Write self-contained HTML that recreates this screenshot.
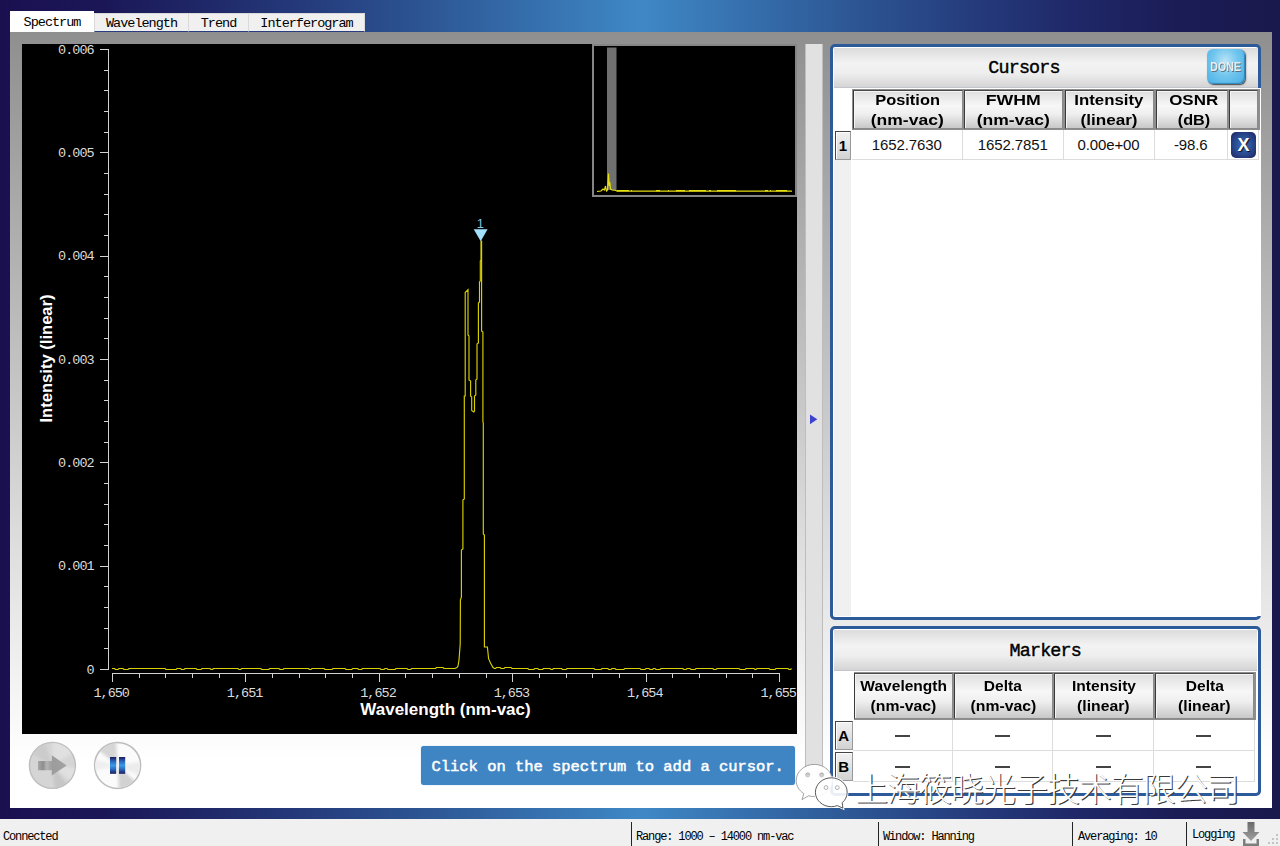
<!DOCTYPE html><html><head><meta charset="utf-8"><title>Spectrum</title><style>
*{box-sizing:border-box;margin:0;padding:0}
html,body{width:1280px;height:846px;overflow:hidden}
body{position:relative;font-family:"Liberation Sans",sans-serif;
 background:linear-gradient(90deg,#1a1050 0%,#1b1757 8%,#1f2868 16%,#253b7c 24%,#2c5290 32%,#346aa8 40%,#3f88c6 50%,#346aa8 60%,#2c5290 68%,#253b7c 76%,#1f2868 84%,#1b1c56 92%,#1a194d 100%);}
.abs{position:absolute}
.mono{font-family:"Liberation Mono",monospace}
#panel{left:10px;top:32px;width:1262px;height:775.5px;background:linear-gradient(180deg,#8f8f8f 0%,#ffffff 94%)}
.tab{top:13px;height:19px;background:#f0f0f0;border:1px solid #d9d9d9;border-bottom:1px solid #2a3c80;font:13.5px "Liberation Mono",monospace;letter-spacing:-1px;color:#000;text-align:center;line-height:19px;white-space:nowrap}
#tab0{left:10px;top:11px;width:84px;height:21px;background:#fff;border:1px solid #fff;line-height:21px}
#plot{left:22px;top:44px;width:775px;height:690px;background:#000}
#status{left:0;top:819px;width:1280px;height:27px;background:#f0f0f0}
.st{top:831px;font:12px "Liberation Mono",monospace;letter-spacing:-1.15px;color:#000;white-space:nowrap;line-height:13px}
.sep{top:822px;width:1px;height:24px;background:#222}
#splitter{left:804.5px;top:44px;width:18px;height:752px;background:#e1e1e1;border-left:1px solid #bdbdbd;border-right:1px solid #bdbdbd}
.title{background:linear-gradient(180deg,#dcdcdc 0%,#f3f3f3 40%,#eeeeee 65%,#d4d4d4 100%);font:18.4px "Liberation Mono",monospace;letter-spacing:-0.84px;-webkit-text-stroke:0.4px #000;text-align:center;color:#000;white-space:nowrap}
.hc{background:linear-gradient(180deg,#dedede 0%,#f7f7f7 40%,#efefef 62%,#c8c8c8 100%);border:1px solid;border-color:#4a4a4a #8a8a8a #8a8a8a #3a3a3a;box-shadow:inset 1px 1px 0 #f4f4f4;font:bold 15.5px "Liberation Sans",sans-serif;text-align:center;color:#000;white-space:nowrap}
.sx{display:inline-block;transform-origin:50% 50%}
.dc{font:15px "Liberation Sans",sans-serif;text-align:center;color:#111;white-space:nowrap;border-right:1px solid #dcdcdc;border-bottom:1px solid #dcdcdc;background:#fff}
.rh{background:linear-gradient(180deg,#f2f2f2,#d2d2d2);border:1px solid;border-color:#444 #999 #999 #444;box-shadow:inset 1px 1px 0 #fff;font:bold 15px "Liberation Sans",sans-serif;text-align:center;color:#000}
</style></head><body>
<div id="panel" class="abs"></div>
<div id="tab0" class="abs tab">Spectrum</div>
<div class="abs tab" style="left:94px;width:95px">Wavelength</div>
<div class="abs tab" style="left:188px;width:61px">Trend</div>
<div class="abs tab" style="left:248px;width:117px">Interferogram</div>
<svg class="abs" id="plot" width="775" height="690" viewBox="0 0 775 690">
<rect width="775" height="690" fill="#000"/>
<path d="M86.5 5V626M78 5.5H87M82 26.5H87M82 46.5H87M82 67.5H87M82 88.5H87M78 108.5H87M82 129.5H87M82 150.5H87M82 170.5H87M82 191.5H87M78 212.5H87M82 232.5H87M82 253.5H87M82 274.5H87M82 294.5H87M78 315.5H87M82 336.5H87M82 356.5H87M82 377.5H87M82 398.5H87M78 418.5H87M82 439.5H87M82 460.5H87M82 480.5H87M82 501.5H87M78 522.5H87M82 542.5H87M82 563.5H87M82 584.5H87M82 604.5H87M78 625.5H87M90 629.5H758M90.5 629V638M117.5 629V634M143.5 629V634M170.5 629V634M197.5 629V634M223.5 629V638M250.5 629V634M277.5 629V634M303.5 629V634M330.5 629V634M357.5 629V638M383.5 629V634M410.5 629V634M437.5 629V634M464.5 629V634M490.5 629V638M517.5 629V634M544.5 629V634M570.5 629V634M597.5 629V634M624.5 629V638M650.5 629V634M677.5 629V634M704.5 629V634M730.5 629V634M757.5 629V638" stroke="#d2d2d2" stroke-width="1" fill="none" shape-rendering="crispEdges"/>
<text x="71.6" y="9.5" text-anchor="end" font-family="Liberation Mono, monospace" font-size="13.5" letter-spacing="-1" fill="#dcdcdc">0.006</text>
<text x="71.6" y="112.8" text-anchor="end" font-family="Liberation Mono, monospace" font-size="13.5" letter-spacing="-1" fill="#dcdcdc">0.005</text>
<text x="71.6" y="216.2" text-anchor="end" font-family="Liberation Mono, monospace" font-size="13.5" letter-spacing="-1" fill="#dcdcdc">0.004</text>
<text x="71.6" y="319.5" text-anchor="end" font-family="Liberation Mono, monospace" font-size="13.5" letter-spacing="-1" fill="#dcdcdc">0.003</text>
<text x="71.6" y="422.8" text-anchor="end" font-family="Liberation Mono, monospace" font-size="13.5" letter-spacing="-1" fill="#dcdcdc">0.002</text>
<text x="71.6" y="526.2" text-anchor="end" font-family="Liberation Mono, monospace" font-size="13.5" letter-spacing="-1" fill="#dcdcdc">0.001</text>
<text x="71.6" y="629.5" text-anchor="end" font-family="Liberation Mono, monospace" font-size="13.5" letter-spacing="-1" fill="#dcdcdc">0</text>
<text x="89.2" y="652.5" text-anchor="middle" font-family="Liberation Mono, monospace" font-size="13.5" letter-spacing="-1" fill="#dcdcdc">1,650</text>
<text x="222.6" y="652.5" text-anchor="middle" font-family="Liberation Mono, monospace" font-size="13.5" letter-spacing="-1" fill="#dcdcdc">1,651</text>
<text x="356.0" y="652.5" text-anchor="middle" font-family="Liberation Mono, monospace" font-size="13.5" letter-spacing="-1" fill="#dcdcdc">1,652</text>
<text x="489.40000000000003" y="652.5" text-anchor="middle" font-family="Liberation Mono, monospace" font-size="13.5" letter-spacing="-1" fill="#dcdcdc">1,653</text>
<text x="622.8000000000001" y="652.5" text-anchor="middle" font-family="Liberation Mono, monospace" font-size="13.5" letter-spacing="-1" fill="#dcdcdc">1,654</text>
<text x="756.2" y="652.5" text-anchor="middle" font-family="Liberation Mono, monospace" font-size="13.5" letter-spacing="-1" fill="#dcdcdc">1,655</text>
<text x="423.5" y="670.6" text-anchor="middle" font-family="Liberation Sans, sans-serif" font-weight="bold" font-size="17" fill="#fff">Wavelength (nm-vac)</text>
<text transform="translate(30.200000000000003 314.5) rotate(-90)" text-anchor="middle" font-family="Liberation Sans, sans-serif" font-weight="bold" font-size="16.6" fill="#fff">Intensity (linear)</text>
<path d="M90.0 624.5 L92.5 624.5 L93.5 625.5 L96.0 625.5 L97.0 624.5 L101.0 624.5 L102.0 625.5 L106.0 625.5 L107.0 624.5 L143.0 624.5 L144.0 625.5 L154.0 625.5 L155.0 624.5 L158.5 624.5 L159.5 625.5 L162.0 625.5 L163.0 624.5 L174.0 624.5 L175.0 625.5 L179.0 625.5 L180.0 624.5 L188.0 624.5 L189.0 625.5 L190.5 625.5 L191.5 624.5 L216.0 624.5 L217.0 625.5 L218.6 625.5 L219.6 624.5 L238.7 624.5 L239.7 625.5 L246.7 625.5 L247.7 624.5 L257.0 624.5 L258.0 625.5 L261.0 625.5 L262.0 624.5 L286.5 624.5 L287.5 625.5 L289.0 625.5 L290.0 624.5 L302.0 624.5 L303.0 625.5 L310.0 625.5 L311.0 624.5 L323.0 624.5 L324.0 625.5 L329.7 625.5 L330.7 624.5 L335.7 624.5 L336.7 625.5 L339.5 625.5 L340.5 624.5 L358.0 624.5 L359.0 625.5 L362.0 625.5 L363.0 624.5 L365.0 624.5 L366.0 625.5 L373.0 625.5 L374.0 624.5 L385.0 624.5 L386.0 625.5 L388.7 625.5 L389.7 624.5 L413.5 624.5 L414.5 623.5 L421.0 623.5 L422.0 624.5 L433.0 624.5 L435.0 623.5 L436.0 622.0 L437.0 616.0 L438.2 600.0 L438.4 556.0 L439.4 553.0 L439.4 506.0 L440.9 505.0 L440.9 456.0 L442.3 455.0 L442.3 352.0 L443.2 352.0 L443.2 248.5 L446.0 245.7 L446.0 291.0 L447.0 292.0 L447.0 336.0 L448.6 337.0 L448.6 352.0 L449.7 353.0 L449.7 366.5 L451.8 368.0 L452.5 367.0 L452.5 352.0 L453.8 351.0 L453.8 336.0 L455.0 335.0 L455.0 300.0 L456.4 299.0 L456.4 259.0 L457.5 258.0 L457.5 238.0 L458.3 237.0 L458.3 217.0 L459.0 216.0 L459.0 197.0 L459.6 197.0 L459.6 287.0 L460.9 288.0 L460.9 378.0 L461.3 379.0 L461.3 490.0 L462.4 491.0 L462.4 603.0 L465.4 603.0 L466.6 614.7 L468.5 619.0 L471.0 623.5 L472.5 624.5 L473.5 624.5 L474.5 623.5 L478.0 623.5 L479.0 624.5 L482.0 624.5 L483.0 623.5 L489.0 623.5 L490.0 624.5 L505.8 624.5 L506.8 625.5 L511.8 625.5 L512.8 624.5 L515.8 624.5 L516.8 625.5 L520.5 625.5 L521.5 624.5 L528.0 624.5 L529.0 625.5 L530.5 625.5 L531.5 624.5 L539.5 624.5 L540.5 625.5 L544.0 625.5 L545.0 624.5 L572.0 624.5 L573.0 625.5 L579.0 625.5 L580.0 624.5 L585.8 624.5 L586.8 625.5 L589.0 625.5 L590.0 624.5 L593.0 624.5 L594.0 625.5 L601.8 625.5 L602.8 624.5 L618.0 624.5 L619.0 625.5 L623.0 625.5 L624.0 624.5 L627.0 624.5 L628.0 625.5 L630.5 625.5 L631.5 624.5 L633.0 624.5 L634.0 625.5 L638.0 625.5 L639.0 624.5 L660.8 624.5 L661.8 625.5 L664.0 625.5 L665.0 624.5 L668.0 624.5 L669.0 625.5 L673.0 625.5 L674.0 624.5 L690.8 624.5 L691.8 625.5 L694.0 625.5 L695.0 624.5 L717.0 624.5 L718.0 625.5 L723.0 625.5 L724.0 624.5 L732.0 624.5 L733.0 625.5 L734.0 625.5 L735.0 624.5 L747.0 624.5 L748.0 625.5 L753.0 625.5 L754.0 624.5 L766.0 624.5 L767.0 625.5 L768.5 625.5 L769.5 624.5 L769.5 624.5" stroke="#d8d000" stroke-width="1.15" fill="none" stroke-linejoin="miter"/>
<path d="M451.7 185.3H465.6L458.7 197.2Z" fill="#a3e0fb"/>
<text x="458.3" y="183.6" text-anchor="middle" font-family="Liberation Sans, sans-serif" font-size="13" fill="#86c3e4">1</text>
<rect x="571" y="1" width="203" height="151" fill="#000" stroke="#858585" stroke-width="2"/>
<rect x="585" y="3.5" width="9.5" height="142.5" fill="#707070"/>
<path d="M575.0 147.5 L579.0 147.0 L581.0 145.0 L582.5 146.0 L583.5 142.0 L584.5 147.0 L585.5 146.0 L586.5 129.5 L587.2 142.0 L587.8 138.0 L588.5 145.0 L590.0 146.0 L594.0 146.5 L595.0 147.2 H770" stroke="#e6de10" stroke-width="1.2" fill="none"/>
<path d="M595 146.6H607M609 146.6H610M634 146.6H638M646 146.6H647M654 146.6H663M667 146.6H684M687 146.6H689M695 146.6H714M743 146.6H746M748 146.6H749M754 146.6H765" stroke="#e6de10" stroke-width="1.3" fill="none"/>
</svg>
<svg class="abs" style="left:26px;top:739px" width="120" height="54" viewBox="26 739 120 54">
<defs>
<linearGradient id="ar" x1="0" x2="1"><stop offset="0" stop-color="#a8a8a8"/><stop offset=".18" stop-color="#8e8e8e"/><stop offset=".3" stop-color="#b4b4b4"/><stop offset=".5" stop-color="#9c9c9c"/><stop offset="1" stop-color="#a2a2a2"/></linearGradient>
<linearGradient id="pb" x1="0" y1="0" x2="0" y2="1"><stop offset="0" stop-color="#1c1c5c"/><stop offset=".28" stop-color="#2a6cc4"/><stop offset=".5" stop-color="#3a9ae8"/><stop offset=".72" stop-color="#2a6cc4"/><stop offset="1" stop-color="#1c1c5c"/></linearGradient>
</defs>
<filter id="bl" x="-20%" y="-20%" width="140%" height="140%"><feGaussianBlur stdDeviation="1.6"/></filter>
<clipPath id="c1"><circle cx="52.4" cy="765.4" r="22.4"/></clipPath><clipPath id="c2"><circle cx="117.6" cy="765.4" r="22.4"/></clipPath>
<circle cx="52.4" cy="765.4" r="23" fill="#d5d5d5" stroke="#bebebe" stroke-width="1.4"/>
<g clip-path="url(#c1)"><g filter="url(#bl)">
<path d="M52.4 765.4L52.4 740A25 25 0 0 1 74 752Z" fill="#e0e0e0"/>
<path d="M52.4 765.4L30 752A25 25 0 0 1 44 741Z" fill="#cbcbcb"/>
<path d="M52.4 765.4L68 786A25 25 0 0 1 55 791Z" fill="#c6c6c6"/>
<path d="M52.4 765.4L78 768A25 25 0 0 1 72 782Z" fill="#e0e0e0"/>
</g></g>
<path d="M38 761H51.8V755.2L66.6 765.5L51.8 775.6V770.2H38Z" fill="url(#ar)"/>
<circle cx="117.6" cy="765.4" r="23" fill="#fbfbfb" stroke="#bdbdbd" stroke-width="1.5"/>
<g clip-path="url(#c2)"><g filter="url(#bl)">
<path d="M117.6 765.4L97 749A25 25 0 0 1 116 740Z" fill="#d6d6d6"/>
<path d="M117.6 765.4L119 791A25 25 0 0 0 137 783Z" fill="#d2d2d2"/>
<path d="M117.6 765.4L143 761A25 25 0 0 1 140 776Z" fill="#ececec"/>
<path d="M117.6 765.4L93 771A25 25 0 0 1 92.500 759Z" fill="#eeeeee"/>
</g></g>
<rect x="110" y="757" width="6.2" height="16.8" fill="url(#pb)"/>
<rect x="119" y="757" width="6.2" height="16.8" fill="url(#pb)"/>
</svg>
<div class="abs mono" style="left:421px;top:746px;width:374px;height:39px;background:#3f85c3;border-radius:3px;box-shadow:0 0 1px #6aa0d0;color:#fff;-webkit-text-stroke:0.5px #fff;font-size:15.46px;line-height:42px;padding-left:10.5px;white-space:nowrap">Click on the spectrum to add a cursor.</div>
<div id="splitter" class="abs"></div>
<svg class="abs" style="left:809px;top:413px" width="10" height="13" viewBox="0 0 10 13"><path d="M1 1.5L8.3 6.3L1 11.2Z" fill="#3e43cf"/></svg>
<div class="abs " style="left:830px;top:44px;width:431px;height:575.5px;border:3.5px solid #2d5a98;border-radius:5px;background:#fff"></div>
<div class="abs title" style="left:833.5px;top:47.5px;width:424.0px;height:40.5px;line-height:42.6px;padding-right:43px;border-bottom:1.5px solid #c2c5cc">Cursors</div>
<div class="abs " style="left:833.5px;top:88px;width:427.5px;height:528px;background:#fff"></div>
<div class="abs " style="left:833.5px;top:159.5px;width:17.5px;height:456.5px;background:#f0f0f0"></div>
<div class="abs " style="left:851.5px;top:88.5px;width:408.0px;height:41.5px;background:#8e8e8e"></div>
<div class="abs hc" style="left:852.5px;top:89.5px;width:110.0px;height:39.5px;line-height:19.4px;font-size:15px"><div style="margin-top:-0.4px"><span class="sx" style="transform:scaleX(1.094)">Position</span><br><span class="sx" style="transform:scaleX(1.167)">(nm-vac)</span></div></div>
<div class="abs hc" style="left:964.0px;top:89.5px;width:99.0px;height:39.5px;line-height:19.4px;font-size:15px"><div style="margin-top:-0.4px"><span class="sx" style="transform:scaleX(1.18)">FWHM</span><br><span class="sx" style="transform:scaleX(1.167)">(nm-vac)</span></div></div>
<div class="abs hc" style="left:1064.5px;top:89.5px;width:89.5px;height:39.5px;line-height:19.4px;font-size:15px"><div style="margin-top:-0.4px"><span class="sx" style="transform:scaleX(1.12)">Intensity</span><br><span class="sx" style="transform:scaleX(1.14)">(linear)</span></div></div>
<div class="abs hc" style="left:1155.5px;top:89.5px;width:72.0px;height:39.5px;line-height:19.4px;font-size:15px"><div style="margin-top:-0.4px"><div style="padding-left:4px"><span class="sx" style="transform:scaleX(1.13)">OSNR</span><br><span class="sx" style="transform:scaleX(1.08)">(dB)</span></div></div></div>
<div class="abs hc" style="left:1229.0px;top:89.5px;width:29.0px;height:39.5px;line-height:19.4px;font-size:15px"><div style="margin-top:-0.4px"></div></div>
<div class="abs dc" style="left:851.5px;top:130px;width:111.5px;height:29.5px;line-height:29.5px;letter-spacing:-0.1px">1652.7630</div>
<div class="abs dc" style="left:963.0px;top:130px;width:100.5px;height:29.5px;line-height:29.5px;letter-spacing:-0.1px">1652.7851</div>
<div class="abs dc" style="left:1063.5px;top:130px;width:91.0px;height:29.5px;line-height:29.5px;letter-spacing:-0.1px">0.00e+00</div>
<div class="abs dc" style="left:1154.5px;top:130px;width:73.5px;height:29.5px;line-height:29.5px;letter-spacing:-0.1px">-98.6</div>
<div class="abs dc" style="left:1228.0px;top:130px;width:30.5px;height:29.5px;line-height:29.5px;letter-spacing:-0.1px"></div>
<div class="abs rh" style="left:835px;top:131px;width:16px;height:28.5px;line-height:27px">1</div>
<div class="abs " style="left:1231px;top:132px;width:25px;height:26px;border-radius:5px;background:radial-gradient(ellipse at 50% 50%,#3d6fb6 0%,#2c4f96 45%,#1c225e 100%);color:#fff;font:bold 18px 'Liberation Sans',sans-serif;text-align:center;line-height:27px;text-shadow:1px 1px 1px #0a1030">X</div>
<div class="abs " style="left:1207px;top:49px;width:37.5px;height:35px;border-radius:6px;background:radial-gradient(ellipse at 48% 36%,#bde5f7 0%,#72c6ee 45%,#46ade4 100%);box-shadow:1px 1px 1.5px #444, inset -1px -1px 1px #2f86bd;color:#ececec;font:bold 13.6px 'Liberation Sans',sans-serif;text-align:center;line-height:36px;text-shadow:1px 1px 0.5px #5a7684"><span style="display:inline-block;transform:scaleX(.78);transform-origin:50% 50%;margin-left:-4px;margin-right:-4px">DONE</span></div>
<div class="abs " style="left:830px;top:626px;width:430.5px;height:170px;border:3.5px solid #2d5a98;border-radius:5px;background:#fff"></div>
<div class="abs title" style="left:833.5px;top:629.5px;width:423.5px;height:41.0px;line-height:44px;border-bottom:1.5px solid #c2c5cc">Markers</div>
<div class="abs " style="left:853.5px;top:671.5px;width:402.0px;height:48.0px;background:#8e8e8e"></div>
<div class="abs hc" style="left:854.0px;top:672.5px;width:98.5px;height:46.0px;line-height:20.6px;padding-top:2.1px;font-size:14.6px"><span class="sx" style="transform:scaleX(1.065)">Wavelength</span><br><span class="sx" style="transform:scaleX(1.08)">(nm-vac)</span></div>
<div class="abs hc" style="left:954.0px;top:672.5px;width:98.5px;height:46.0px;line-height:20.6px;padding-top:2.1px;font-size:14.6px"><span class="sx" style="transform:scaleX(1.065)">Delta</span><br><span class="sx" style="transform:scaleX(1.08)">(nm-vac)</span></div>
<div class="abs hc" style="left:1054.0px;top:672.5px;width:99.5px;height:46.0px;line-height:20.6px;padding-top:2.1px;font-size:14.6px"><span class="sx" style="transform:scaleX(1.065)">Intensity</span><br><span class="sx" style="transform:scaleX(1.08)">(linear)</span></div>
<div class="abs hc" style="left:1155.0px;top:672.5px;width:99.0px;height:46.0px;line-height:20.6px;padding-top:2.1px;font-size:14.6px"><span class="sx" style="transform:scaleX(1.065)">Delta</span><br><span class="sx" style="transform:scaleX(1.08)">(linear)</span></div>
<div class="abs dc" style="left:853.0px;top:719.5px;width:100.0px;height:31.0px;line-height:31.0px"><span style="display:inline-block;width:15px;height:1.5px;background:#444;vertical-align:middle;margin-top:-1px"></span></div>
<div class="abs dc" style="left:953.0px;top:719.5px;width:100.0px;height:31.0px;line-height:31.0px"><span style="display:inline-block;width:15px;height:1.5px;background:#444;vertical-align:middle;margin-top:-1px"></span></div>
<div class="abs dc" style="left:1053.0px;top:719.5px;width:101.0px;height:31.0px;line-height:31.0px"><span style="display:inline-block;width:15px;height:1.5px;background:#444;vertical-align:middle;margin-top:-1px"></span></div>
<div class="abs dc" style="left:1154.0px;top:719.5px;width:100.5px;height:31.0px;line-height:31.0px"><span style="display:inline-block;width:15px;height:1.5px;background:#444;vertical-align:middle;margin-top:-1px"></span></div>
<div class="abs rh" style="left:835px;top:721.0px;width:17.5px;height:29.0px;line-height:27.0px">A</div>
<div class="abs dc" style="left:853.0px;top:750.5px;width:100.0px;height:31.0px;line-height:31.0px"><span style="display:inline-block;width:15px;height:1.5px;background:#444;vertical-align:middle;margin-top:-1px"></span></div>
<div class="abs dc" style="left:953.0px;top:750.5px;width:100.0px;height:31.0px;line-height:31.0px"><span style="display:inline-block;width:15px;height:1.5px;background:#444;vertical-align:middle;margin-top:-1px"></span></div>
<div class="abs dc" style="left:1053.0px;top:750.5px;width:101.0px;height:31.0px;line-height:31.0px"><span style="display:inline-block;width:15px;height:1.5px;background:#444;vertical-align:middle;margin-top:-1px"></span></div>
<div class="abs dc" style="left:1154.0px;top:750.5px;width:100.5px;height:31.0px;line-height:31.0px"><span style="display:inline-block;width:15px;height:1.5px;background:#444;vertical-align:middle;margin-top:-1px"></span></div>
<div class="abs rh" style="left:835px;top:752.0px;width:17.5px;height:29.0px;line-height:27.0px">B</div>
<div id="status" class="abs"></div>
<div class="abs st" style="left:3px">Connected</div>
<div class="abs sep" style="left:631px"></div>
<div class="abs sep" style="left:878px"></div>
<div class="abs sep" style="left:1072px"></div>
<div class="abs sep" style="left:1186px"></div>
<div class="abs st" style="left:636px">Range: 1000 – 14000 nm-vac</div>
<div class="abs st" style="left:883px">Window: Hanning</div>
<div class="abs st" style="left:1078px">Averaging: 10</div>
<div class="abs st" style="left:1192px;top:828.5px">Logging</div>
<svg class="abs" style="left:1240px;top:821px" width="22" height="25" viewBox="0 0 22 25"><defs><linearGradient id="dl" x1="0" y1="0" x2="0" y2="1"><stop offset="0" stop-color="#6a6a6a"/><stop offset="1" stop-color="#a0a0a0"/></linearGradient></defs><path d="M7.5 1H14.5V11H19.5L11 20L2.5 11H7.5Z" fill="url(#dl)"/><path d="M3 18V25H19V18H16.5V22.5H5.5V18Z" fill="#7e7e7e"/></svg>
<svg class="abs" style="left:1266px;top:833px" width="14" height="13" viewBox="0 0 14 13"><g fill="#c4c4c4"><rect x="10" y="9" width="2" height="2"/><rect x="6" y="9" width="2" height="2"/><rect x="10" y="5" width="2" height="2"/><rect x="2" y="9" width="2" height="2"/><rect x="6" y="5" width="2" height="2"/><rect x="10" y="1" width="2" height="2"/></g></svg>
<svg class="abs" style="left:780px;top:755px" width="480" height="60" viewBox="780 755 480 60">
<text x="856.15" y="801.9" font-family="Liberation Sans, Noto Sans CJK SC, sans-serif" font-weight="300" font-size="33" letter-spacing="-1.04" fill="#3a3a3a">上海筱晓光子技术有限公司</text>
<text x="855.05" y="800.8" font-family="Liberation Sans, Noto Sans CJK SC, sans-serif" font-weight="300" font-size="33" letter-spacing="-1.04" fill="#ffffff">上海筱晓光子技术有限公司</text>
<path d="M814.25 764.4C824.2 764.4 832.3 771.6 832.3 780.5C832.3 789.4 824.2 796.6 814.25 796.6C812.3 796.6 810.4 796.3 808.6 795.8L802 799.6L803.8 793.6C799.2 790.7 796.2 785.9 796.2 780.5C796.2 771.6 804.3 764.4 814.25 764.4Z" fill="#ffffff" fill-opacity="0.95" stroke="#8c8c8c" stroke-width="0.8"/>
<circle cx="807.7" cy="775.2" r="2.3" fill="#cdcdcd"/><circle cx="821.7" cy="775.2" r="2.3" fill="#cdcdcd"/>
<path d="M805.5 774.6A2.3 2.3 0 0 1 809.9 774.6M819.5 774.6A2.3 2.3 0 0 1 823.9 774.6" fill="none" stroke="#9a9a9a" stroke-width="0.8"/>
<path d="M831.3 777.8C840.1 777.8 847.2 784.3 847.2 792.25C847.2 796.4 845.3 800.1 842.2 802.7L842.9 808.2L837.3 805.6C835.4 806.3 833.4 806.7 831.3 806.7C822.5 806.7 815.4 800.2 815.4 792.25C815.4 784.3 822.5 777.8 831.3 777.8Z" fill="none" stroke="#ffffff" stroke-width="2.6"/>
<path d="M831.3 777.8C840.1 777.8 847.2 784.3 847.2 792.25C847.2 796.4 845.3 800.1 842.2 802.7L842.9 808.2L837.3 805.6C835.4 806.3 833.4 806.7 831.3 806.7C822.5 806.7 815.4 800.2 815.4 792.25C815.4 784.3 822.5 777.8 831.3 777.8Z" fill="#ffffff" fill-opacity="0.9" stroke="#3c3c3c" stroke-width="0.85"/>
<circle cx="826" cy="787.6" r="1.9" fill="#fff" stroke="#9a9a9a" stroke-width="0.8"/><circle cx="837.3" cy="787.6" r="1.9" fill="#fff" stroke="#9a9a9a" stroke-width="0.8"/>
</svg>
</body></html>
